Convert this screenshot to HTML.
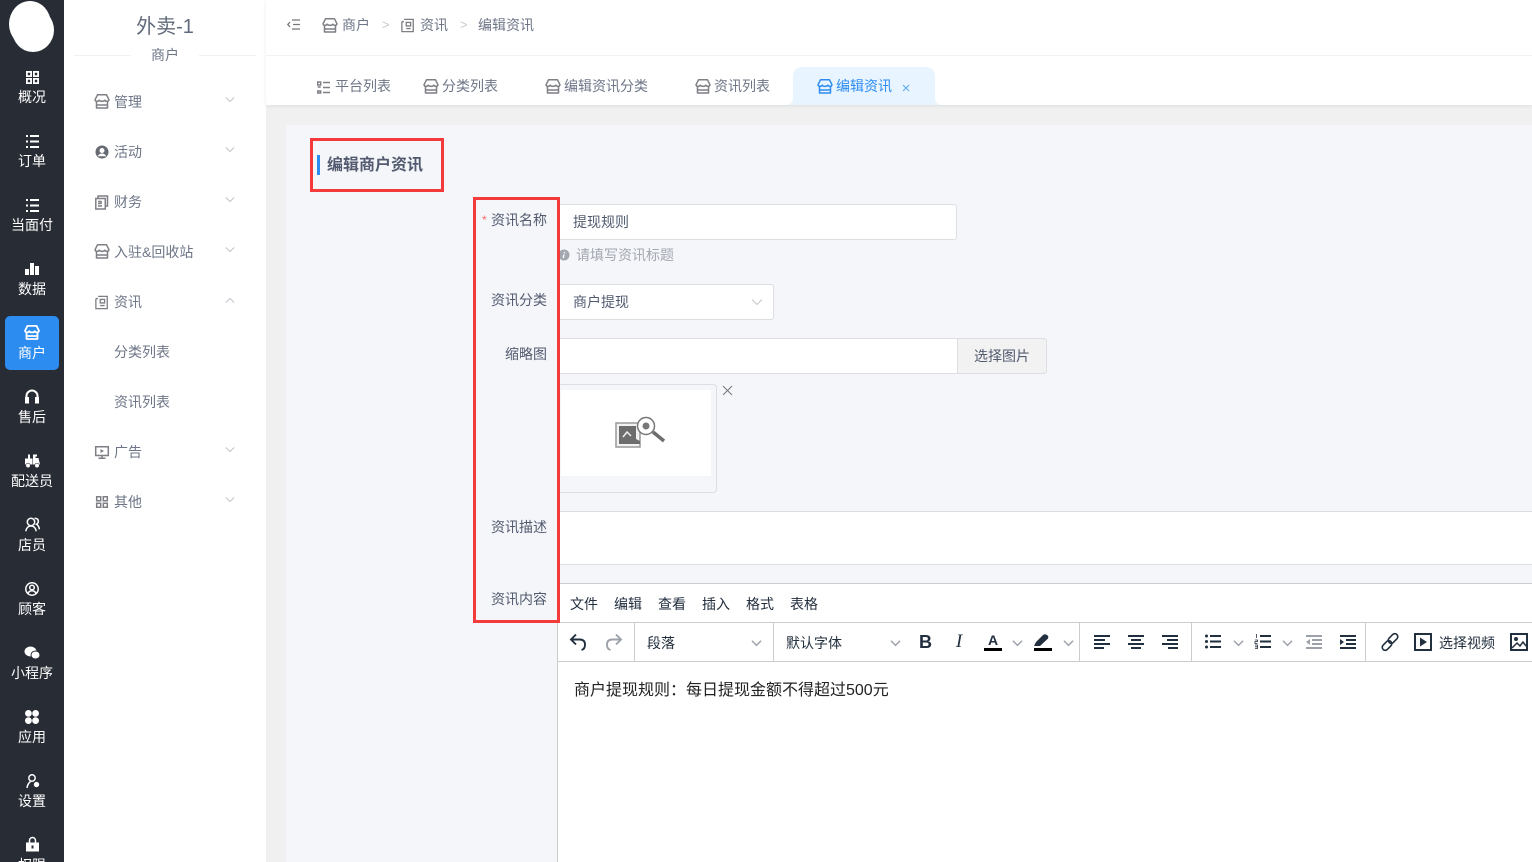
<!DOCTYPE html>
<html lang="zh-CN"><head><meta charset="utf-8"><title>编辑资讯</title>
<style>
*{box-sizing:border-box}
html,body{margin:0;padding:0;width:1532px;height:862px;overflow:hidden;background:#f0f0f0}
body{position:relative;font-family:"Liberation Sans","Noto Sans CJK SC",sans-serif;font-size:14px;color:#515a6e}
.a{position:absolute}
.t{position:absolute;line-height:20px;white-space:nowrap}
.s{position:absolute;left:0;width:64px;text-align:center;color:#fff;line-height:20px;font-size:14px}
.m{color:#6d7587;font-size:14px}
.l{color:#515a6e;font-size:14px;text-align:right;width:80px;left:467px}
svg{position:absolute;overflow:visible}
.w{fill:none;stroke:#fff;stroke-width:1.8}
.g{fill:none;stroke:#7d7f85;stroke-width:1.5}
.d{fill:none;stroke:#222f3e;stroke-width:2}
.ch{fill:none;stroke:#b5b8c0;stroke-width:1}
.tc{fill:none;stroke:#9ea4ad;stroke-width:1.6}
.e{color:#222f3e;font-size:14px}
</style></head><body>
<svg width="0" height="0" style="position:absolute"><defs>
<symbol id="store" viewBox="0 0 16 16"><path d="M3.500 .8h9l2.500 5q-.6 1.600-2 1.600t-2.200-1.200q-.9 1.200-2.800 1.200t-2.800-1.200q-.8 1.200-2.200 1.200t-2-1.600zM2.500 7.500v6.500h11v-6.500M2.500 11h11" stroke-linejoin="round"/></symbol>
<symbol id="down" viewBox="0 0 12 8"><path d="M1 1.500l5 5 5-5"/></symbol>
<symbol id="up" viewBox="0 0 12 8"><path d="M1 6.500l5-5 5 5"/></symbol>
<symbol id="doc" viewBox="0 0 16 16"><path d="M1 3.500h2.500M3.500 1h10.500v14h-13v-11.500M6 4.500h5v4h-5zM6 11.500h5"/></symbol>
</defs></svg>

<!-- primary sidebar -->
<div class="a" style="left:0;top:0;width:64px;height:862px;background:#282c35"></div>
<div class="a" style="left:9px;top:1px;width:42px;height:46px;background:#fff;border-radius:50%"></div>
<div class="a" style="left:12px;top:8px;width:42px;height:44px;background:#fff;border-radius:50%"></div>
<div class="a" style="left:5px;top:316px;width:54px;height:54px;background:#2d8cf0;border-radius:5px"></div>

<svg style="left:26px;top:71px" width="13" height="13" class="w"><path d="M.9.9h4.200v4.200h-4.200zM7.900.9h4.200v4.200h-4.200zM.9 7.900h4.200v4.200h-4.200zM7.900 7.900h4.200v4.200h-4.200z"/></svg>
<div class="s" style="top:87px">概况</div>
<svg style="left:26px;top:135px" width="13" height="13" class="w"><path d="M0 1h2M4 1h9M0 6.500h2M4 6.500h9M0 12h2M4 12h9" stroke-width="2"/></svg>
<div class="s" style="top:151px">订单</div>
<svg style="left:26px;top:199px" width="13" height="13" class="w"><path d="M0 1h2M4 1h9M0 6.500h2M4 6.500h9M0 12h2M4 12h9" stroke-width="2"/></svg>
<div class="s" style="top:215px">当面付</div>
<svg style="left:25px;top:263px" width="14" height="12"><path fill="#fff" d="M0 6h4v6h-4zM5 0h4v12h-4zM10 3h4v9h-4z"/></svg>
<div class="s" style="top:279px">数据</div>
<svg style="left:24px;top:325px" width="16" height="16" class="w"><use href="#store"/></svg>
<div class="s" style="top:343px">商户</div>
<svg style="left:25px;top:390px" width="14" height="14"><path fill="none" stroke="#fff" stroke-width="2" d="M1.500 9v-3a5.500 5.500 0 0 1 11 0v3"/><path fill="#fff" d="M0 7h4v6.500h-4zM10 7h4v6.500h-4z"/></svg>
<div class="s" style="top:407px">售后</div>
<svg style="left:25px;top:453px" width="15" height="15"><path fill="#fff" d="M0 5.500h7.500v6h-7.500zM8 1.500h4v2h-1.500v1.500h3l1.500 6.500h-7zM3 1.500h2v4h-2z"/><circle cx="3" cy="12.500" r="2.300" fill="#fff" stroke="#282c35" stroke-width=".6"/><circle cx="12" cy="12.500" r="2.300" fill="#fff" stroke="#282c35" stroke-width=".6"/></svg>
<div class="s" style="top:471px">配送员</div>
<svg style="left:25px;top:517px" width="15" height="15" class="w"><circle cx="6" cy="5" r="3.700" stroke-width="1.500"/><path stroke-width="1.500" d="M.8 14.200c.6-3.500 2.500-5.200 5.200-5.200s4.600 1.700 5.200 5.200M9.500 1.500c2.500-.5 4 1 3.800 3.200q-.2 1.800-1.800 2.600c1.700.9 2.600 2.900 2.900 5"/></svg>
<div class="s" style="top:535px">店员</div>
<svg style="left:25px;top:582px" width="14" height="14" class="w"><circle cx="7" cy="7" r="6.200" stroke-width="1.500"/><circle cx="7" cy="5.500" r="2.300" stroke-width="1.500"/><path stroke-width="1.500" d="M2.800 11.500c1-2 2.500-2.800 4.200-2.800s3.200.8 4.200 2.800"/></svg>
<div class="s" style="top:599px">顾客</div>
<svg style="left:24px;top:646px" width="16" height="14"><ellipse cx="6.500" cy="5.500" rx="6" ry="5" fill="#fff"/><ellipse cx="11.500" cy="9" rx="4.500" ry="4" fill="#fff" stroke="#282c35"/></svg>
<div class="s" style="top:663px">小程序</div>
<svg style="left:25px;top:710px" width="14" height="14"><circle cx="3.400" cy="3.400" r="3.400" fill="#fff"/><circle cx="10.600" cy="3.400" r="3.400" fill="#fff"/><circle cx="3.400" cy="10.600" r="3.400" fill="#fff"/><circle cx="10.600" cy="10.600" r="3.400" fill="#fff"/></svg>
<div class="s" style="top:727px">应用</div>
<svg style="left:26px;top:774px" width="14" height="15" class="w"><circle cx="6" cy="4" r="3.200" stroke-width="1.500"/><path stroke-width="1.500" d="M1 14c.4-3 1.500-5 3.500-6.500"/><circle cx="10.500" cy="10.500" r="1.800" fill="#fff"/></svg>
<div class="s" style="top:791px">设置</div>
<svg style="left:26px;top:837px" width="13" height="15"><path fill="none" stroke="#fff" stroke-width="1.500" d="M3.500 6v-2.500a3 3 0 0 1 6 0v2.500"/><path fill="#fff" fill-rule="evenodd" d="M0 5.500h13v9h-13zM5.500 8.500v3h2v-3z"/></svg>
<div class="s" style="top:855px">权限</div>

<!-- secondary sidebar -->
<div class="a" style="left:64px;top:0;width:202px;height:862px;background:#fff"></div>
<div class="a" style="left:74px;top:55px;width:182px;height:1px;background:#f0f0f0"></div>
<div class="t" style="left:64px;width:202px;text-align:center;top:14px;font-size:20px;line-height:26px;color:#616a7a">外卖-1</div>
<div class="a" style="left:131px;top:45px;width:68px;height:20px;background:#fff"></div>
<div class="t m" style="left:64px;width:202px;text-align:center;top:45px">商户</div>

<svg style="left:94px;top:94px" width="16" height="16" class="g"><use href="#store"/></svg><div class="t m" style="left:114px;top:92px">管理</div>
<svg style="left:225px;top:96px" width="10" height="7" class="ch"><use href="#down"/></svg>
<svg style="left:95px;top:145px" width="14" height="14"><circle cx="7" cy="7" r="6.500" fill="#666a72"/><circle cx="7" cy="5.500" r="2.500" fill="#fff"/><path d="M2.800 11.200c1-2 2.500-2.700 4.200-2.700s3.200.7 4.200 2.700z" fill="#fff"/></svg><div class="t m" style="left:114px;top:142px">活动</div>
<svg style="left:225px;top:146px" width="10" height="7" class="ch"><use href="#down"/></svg>
<svg style="left:95px;top:195px" width="14" height="15" class="g"><path d="M3 3v-2h9.500v10h-2M.8 3.500h9.500v10.500h-9.500zM3 6.500h3v2h-3M3 11h4"/></svg><div class="t m" style="left:114px;top:192px">财务</div>
<svg style="left:225px;top:196px" width="10" height="7" class="ch"><use href="#down"/></svg>
<svg style="left:94px;top:244px" width="16" height="16" class="g"><use href="#store"/></svg><div class="t m" style="left:114px;top:242px">入驻&amp;回收站</div>
<svg style="left:225px;top:246px" width="10" height="7" class="ch"><use href="#down"/></svg>
<svg style="left:95px;top:295px" width="14" height="15" class="g"><use href="#doc"/></svg><div class="t m" style="left:114px;top:292px">资讯</div>
<svg style="left:225px;top:297px" width="10" height="7" class="ch"><use href="#up"/></svg>
<div class="t m" style="left:114px;top:342px">分类列表</div>
<div class="t m" style="left:114px;top:392px">资讯列表</div>
<svg style="left:95px;top:446px" width="14" height="13" class="g"><path d="M.7.7h12.600v8.800h-12.600zM3.500 12.300h7M7 9.500v2.800"/><path d="M5.500 3l3.500 2-3.500 2z" fill="#7d7f85" stroke="none"/></svg><div class="t m" style="left:114px;top:442px">广告</div>
<svg style="left:225px;top:446px" width="10" height="7" class="ch"><use href="#down"/></svg>
<svg style="left:96px;top:496px" width="12" height="12" class="g"><path d="M.7.7h4v4h-4zM7.300.7h4v4h-4zM.7 7.300h4v4h-4zM7.300 7.300h4v4h-4z"/></svg><div class="t m" style="left:114px;top:492px">其他</div>
<svg style="left:225px;top:496px" width="10" height="7" class="ch"><use href="#down"/></svg>

<!-- header -->
<div class="a" style="left:266px;top:0;width:1266px;height:105px;background:#fff;box-shadow:0 1px 4px rgba(0,21,41,.08)"></div>
<div class="a" style="left:266px;top:55px;width:1266px;height:1px;background:#f3f3f3"></div>
<svg style="left:287px;top:19px" width="14" height="12" fill="none" stroke="#777" stroke-width="1.300"><path d="M5 1h8M6 5.500h7M5 10h8M3 3l-2.200 2.500 2.200 2.500"/></svg>
<svg style="left:322px;top:18px" width="16" height="16" class="g"><use href="#store"/></svg><div class="t m" style="left:342px;top:15px">商户</div>
<div class="t" style="left:382px;top:15px;color:#c5c8ce;font-size:13px">&gt;</div>
<svg style="left:401px;top:18px" width="14" height="15" class="g"><use href="#doc"/></svg><div class="t m" style="left:420px;top:15px">资讯</div>
<div class="t" style="left:460px;top:15px;color:#c5c8ce;font-size:13px">&gt;</div>
<div class="t m" style="left:478px;top:15px">编辑资讯</div>

<!-- tabs -->
<svg style="left:317px;top:81px" width="13" height="13" fill="none" stroke="#7d7f85" stroke-width="1.400"><path d="M.7 1h3v3h-3zM6 1.500h7M.7 6h3M6 6.500h7M.7 10h3v2h-3zM6 11.500h7"/></svg><div class="t m" style="left:335px;top:76px">平台列表</div>
<svg style="left:423px;top:79px" width="16" height="16" class="g"><use href="#store"/></svg><div class="t m" style="left:442px;top:76px">分类列表</div>
<svg style="left:545px;top:79px" width="16" height="16" class="g"><use href="#store"/></svg><div class="t m" style="left:564px;top:76px">编辑资讯分类</div>
<svg style="left:695px;top:79px" width="16" height="16" class="g"><use href="#store"/></svg><div class="t m" style="left:714px;top:76px">资讯列表</div>
<svg style="left:787px;top:67px" width="154" height="38"><path fill="#e8f4ff" d="M0 38q6-1 6-8v-20q0-10 10-10h122q10 0 10 10v20q0 7 6 8z"/></svg>
<svg style="left:817px;top:79px" width="16" height="16" fill="none" stroke="#2d8cf0" stroke-width="1.500"><use href="#store"/></svg><div class="t" style="left:836px;top:76px;color:#2d8cf0">编辑资讯</div>
<svg style="left:902px;top:84px" width="8" height="8" fill="none" stroke="#5aa6f3"><path d="M1 1l6 6M7 1l-6 6"/></svg>

<!-- content -->
<div class="a" style="left:286px;top:125px;width:1246px;height:737px;background:#f5f6fa"></div>
<div class="a" style="left:310px;top:138px;width:134px;height:54px;border:3px solid #f43a3a"></div>
<div class="a" style="left:317px;top:155px;width:3px;height:20px;background:#2d8cf0"></div>
<div class="t" style="left:327px;top:155px;font-size:16px;font-weight:700;line-height:22px;color:#515a6e">编辑商户资讯</div>

<!-- form controls -->
<div class="a" style="left:558px;top:204px;width:399px;height:36px;background:#fff;border:1px solid #dcdee2;border-left:0;border-radius:0 3px 3px 0"></div>
<div class="t" style="left:573px;top:212px;color:#515a6e">提现规则</div>
<svg style="left:558px;top:249px" width="12" height="12"><circle cx="6" cy="6" r="5.500" fill="#a3a7af"/><path d="M6.500 3v1.200M6 5.500l-.8 3.500" stroke="#fff" stroke-width="1.400"/></svg>
<div class="t" style="left:576px;top:245px;color:#a3a7b0">请填写资讯标题</div>
<div class="a" style="left:558px;top:284px;width:216px;height:36px;background:#fff;border:1px solid #dcdee2;border-left:0;border-radius:0 3px 3px 0"></div>
<div class="t" style="left:573px;top:292px;color:#515a6e">商户提现</div>
<svg style="left:751px;top:298px" width="12" height="8" fill="none" stroke="#c5c8ce"><use href="#down"/></svg>
<div class="a" style="left:558px;top:338px;width:400px;height:36px;background:#fff;border:1px solid #dcdee2;border-left:0"></div>
<div class="a" style="left:957px;top:338px;width:90px;height:36px;background:#f2f2f2;border:1px solid #dcdee2;border-radius:0 3px 3px 0"></div>
<div class="t" style="left:974px;top:346px;color:#515a6e">选择图片</div>
<div class="a" style="left:558px;top:384px;width:159px;height:109px;background:#f5f6fa;border:1px solid #dcdee2;border-left:0;border-radius:0 4px 4px 0"></div>
<div class="a" style="left:561px;top:390px;width:150px;height:86px;background:#fff"></div>
<svg style="left:615px;top:416px" width="50" height="33"><path d="M1 7h24v24h-24z" fill="#f2f2f2" stroke="#999" stroke-width="1.500"/><path d="M4 10h17v13l4 2v3h-21z" fill="#6d6d6d"/><path d="M8 21l4-5 4 4" fill="none" stroke="#eee" stroke-width="1.500"/><circle cx="31" cy="10" r="8.500" fill="#fff" stroke="#777" stroke-width="1.500"/><circle cx="31" cy="10" r="3.500" fill="#777"/><path d="M38 16l11 9" stroke="#6d6d6d" stroke-width="3.500"/></svg>
<svg style="left:722px;top:385px" width="11" height="11" fill="none" stroke="#777" stroke-width="1"><path d="M1 1l9 9M10 1l-9 9"/></svg>
<div class="a" style="left:558px;top:511px;width:974px;height:54px;background:#fff;border:1px solid #dcdee2;border-width:1px 0"></div>

<!-- red frame and labels -->
<div class="a" style="left:473px;top:197px;width:87px;height:426px;border:3px solid #f43a3a;z-index:3"></div>
<div class="t" style="left:482px;top:210px;color:#f66;font-size:12px">*</div>
<div class="t l" style="top:210px">资讯名称</div>
<div class="t l" style="top:290px">资讯分类</div>
<div class="t l" style="top:344px">缩略图</div>
<div class="t l" style="top:517px">资讯描述</div>
<div class="t l" style="top:589px">资讯内容</div>

<!-- editor -->
<div class="a" style="left:557px;top:583px;width:975px;height:279px;background:#fff;border:1px solid #ccc;border-width:1px 0 0 1px"></div>
<div class="a" style="left:558px;top:622px;width:974px;height:1px;background:#ccc"></div>
<div class="a" style="left:558px;top:661px;width:974px;height:1px;background:#ccc"></div>
<div class="t e" style="left:570px;top:594px">文件</div>
<div class="t e" style="left:614px;top:594px">编辑</div>
<div class="t e" style="left:658px;top:594px">查看</div>
<div class="t e" style="left:702px;top:594px">插入</div>
<div class="t e" style="left:746px;top:594px">格式</div>
<div class="t e" style="left:790px;top:594px">表格</div>
<div class="a" style="left:634px;top:623px;width:1px;height:38px;background:#ccc"></div>
<div class="a" style="left:773px;top:623px;width:1px;height:38px;background:#ccc"></div>
<div class="a" style="left:1079px;top:623px;width:1px;height:38px;background:#ccc"></div>
<div class="a" style="left:1191px;top:623px;width:1px;height:38px;background:#ccc"></div>
<div class="a" style="left:1365px;top:623px;width:1px;height:38px;background:#ccc"></div>

<svg style="left:569px;top:633px" width="18" height="18" class="d"><path d="M7 1.500l-5 5 5 5M2 6.500h9q5 .3 5 5t-3.500 5.500" stroke-width="1.900"/></svg>
<svg style="left:605px;top:633px" width="18" height="18" fill="none" stroke="#9da2aa" stroke-width="1.900"><path d="M11 1.500l5 5-5 5M16 6.500h-9q-5 .3-5 5t3.500 5.500"/></svg>
<div class="t e" style="left:647px;top:633px">段落</div>
<svg style="left:751px;top:639px" width="11" height="8" class="tc"><use href="#down"/></svg>
<div class="t e" style="left:786px;top:633px">默认字体</div>
<svg style="left:890px;top:639px" width="11" height="8" class="tc"><use href="#down"/></svg>
<div class="t" style="left:918px;top:632px;width:15px;text-align:center;font-size:18px;font-weight:700;color:#222f3e;font-family:'Liberation Sans',sans-serif">B</div>
<div class="t" style="left:952px;top:632px;width:14px;text-align:center;font-size:19px;font-style:italic;color:#222f3e;font-family:'Liberation Serif',serif">I</div>
<div class="t" style="left:984px;top:630px;width:18px;text-align:center;font-size:14px;font-weight:700;color:#222f3e">A</div>
<div class="a" style="left:984px;top:648px;width:18px;height:3px;background:#000"></div>
<svg style="left:1012px;top:639px" width="11" height="8" class="tc"><use href="#down"/></svg>
<svg style="left:1034px;top:634px" width="18" height="13"><path d="M0 12l2-4 7-7q2-1.500 4 0l1 1q1 2-1 3.500l-7 6.500z" fill="#222f3e"/></svg>
<div class="a" style="left:1034px;top:648px;width:18px;height:3px;background:#000"></div>
<svg style="left:1063px;top:639px" width="11" height="8" class="tc"><use href="#down"/></svg>
<svg style="left:1094px;top:635px" width="16" height="14" fill="none" stroke="#222f3e" stroke-width="2"><path d="M0 1h16M0 5h11M0 9h16M0 13h10"/></svg>
<svg style="left:1128px;top:635px" width="16" height="14" fill="none" stroke="#222f3e" stroke-width="2"><path d="M0 1h16M3 5h10M0 9h16M3 13h10"/></svg>
<svg style="left:1162px;top:635px" width="16" height="14" fill="none" stroke="#222f3e" stroke-width="2"><path d="M0 1h16M5 5h11M0 9h16M6 13h10"/></svg>
<svg style="left:1205px;top:634px" width="16" height="15" fill="none" stroke="#222f3e" stroke-width="2"><path d="M5 2h11M5 7.500h11M5 13h11"/><g fill="#222f3e" stroke="none"><circle cx="1.500" cy="2" r="1.500"/><circle cx="1.500" cy="7.500" r="1.500"/><circle cx="1.500" cy="13" r="1.500"/></g></svg>
<svg style="left:1233px;top:639px" width="11" height="8" class="tc"><use href="#down"/></svg>
<svg style="left:1255px;top:634px" width="16" height="15" fill="none" stroke="#222f3e" stroke-width="2"><path d="M5 2h11M5 7.500h11M5 13h11"/><path d="M1.500 0v4M0 6h2.500v1.500h-2.500v2h2.500M0 11h2.500v3.500h-2.500M0 12.800h2.500" stroke-width=".8"/></svg>
<svg style="left:1282px;top:639px" width="11" height="8" class="tc"><use href="#down"/></svg>
<svg style="left:1306px;top:635px" width="16" height="14" fill="none" stroke="#9da2aa" stroke-width="2"><path d="M0 1h16M6 5h10M6 9h10M0 13h16"/><path d="M4 4v6l-4-3z" fill="#9da2aa" stroke="none"/></svg>
<svg style="left:1340px;top:635px" width="16" height="14" fill="none" stroke="#222f3e" stroke-width="2"><path d="M0 1h16M6 5h10M6 9h10M0 13h16"/><path d="M0 4v6l4-3z" fill="#222f3e" stroke="none"/></svg>
<svg style="left:1381px;top:633px" width="18" height="18" fill="none" stroke="#222f3e" stroke-width="1.600"><rect x="9" y="0" width="6" height="11" rx="3" transform="rotate(45 12 5.500)"/><rect x="3" y="7" width="6" height="11" rx="3" transform="rotate(45 6 12.500)"/></svg>
<svg style="left:1414px;top:633px" width="18" height="18"><path d="M1 1h16v16h-16z" fill="none" stroke="#222f3e" stroke-width="2"/><path d="M6 4.500l7 4.500-7 4.500z" fill="#222f3e"/></svg>
<div class="t e" style="left:1439px;top:633px">选择视频</div>
<svg style="left:1510px;top:633px" width="18" height="18"><path d="M1 1h16v16h-16z" fill="none" stroke="#222f3e" stroke-width="2"/><circle cx="6" cy="6" r="2" fill="#222f3e"/><path d="M2 15l5-5 3 3 3-4 3 4" fill="none" stroke="#222f3e" stroke-width="1.500"/></svg>
<div class="t" style="left:574px;top:681px;color:#222;font-size:16px">商户提现规则：每日提现金额不得超过500元</div>
</body></html>
